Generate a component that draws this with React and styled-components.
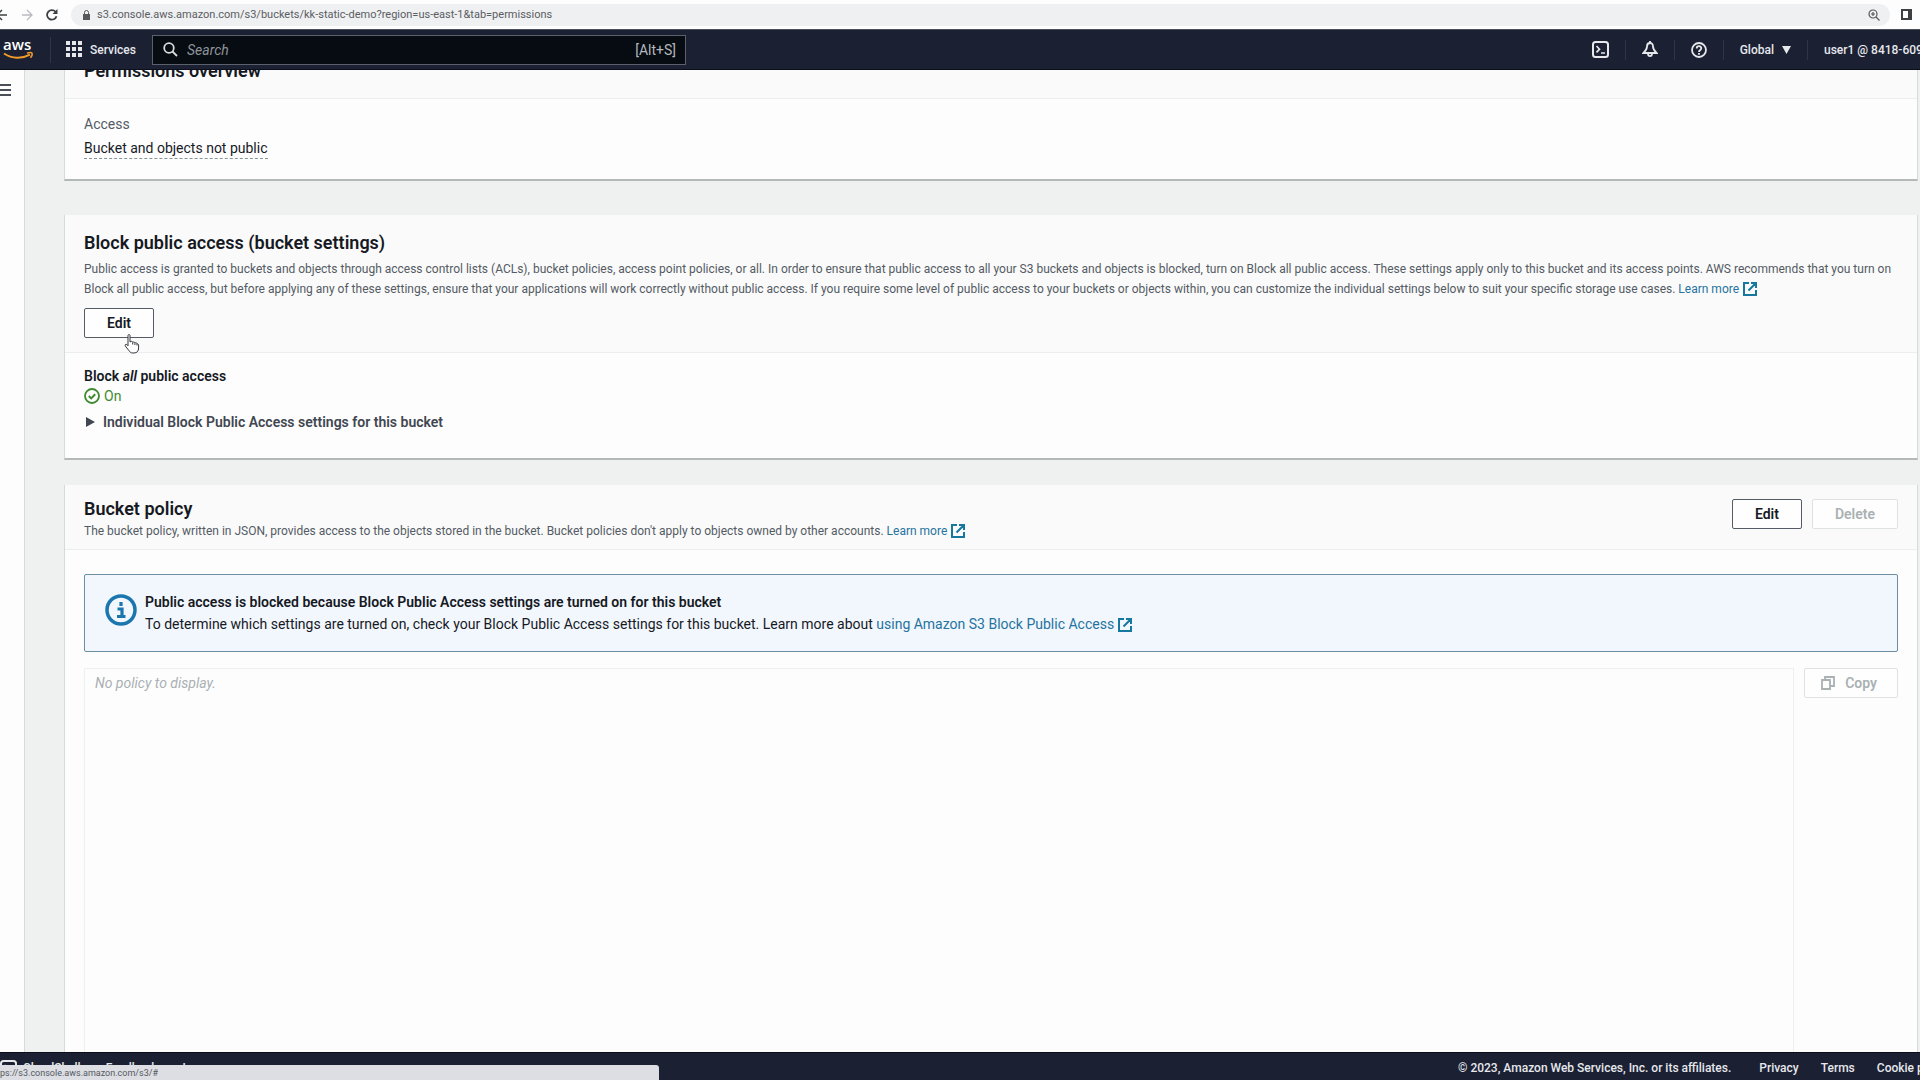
import React from "react";
import styled, { createGlobalStyle } from "styled-components";

const GlobalStyle = createGlobalStyle`
    * {
        box-sizing: border-box;
    }
    body {
        margin: 0;
        overflow: hidden;
        font-family: Roboto, "Noto Sans", sans-serif;
        font-size: 14px;
        line-height: 20px;
        color: #16191f;
    }
    h2, h3, p {
        margin: 0;
    }
    svg {
        display: block;
        flex: none;
    }
    button {
        font-family: inherit;
    }
`;

const Page = styled.div`
    display: flex;
    flex-direction: column;
    height: 100vh;
    overflow: hidden;
    background-color: #eff0f0;
`;

/* browser bar */
const BrowserBar = styled.div`
    display: flex;
    align-items: center;
    flex: none;
    height: 29px;
    padding-right: 8px;
    background-color: #fdfdfd;
`;

const BrowserButton = styled.button`
    display: flex;
    padding: 0;
    border: 0;
    background: none;
    color: ${(props) => (props.$dim ? "#b9bbbe" : "#3c4043")};
    margin-right: ${(props) => props.$gap || 0}px;
`;

const AddressPill = styled.div`
    display: flex;
    align-items: center;
    flex: 1;
    gap: 7px;
    height: 22px;
    padding: 0 10px 0 12px;
    margin-right: 11px;
    border-radius: 11px;
    background-color: #eff0f2;
    color: #55585c;
`;

const AddressInput = styled.input`
    flex: 1;
    min-width: 0;
    padding: 0;
    border: 0;
    outline: 0;
    background: none;
    font-family: inherit;
    font-size: 11px;
    color: #5a5d62;
`;

/* console header */
const TopNav = styled.header`
    display: flex;
    align-items: center;
    flex: none;
    height: 41px;
    background-color: #1b2033;
    border-top: 1px solid #4a4f5c;
    border-bottom: 1px solid #0b0f1c;
    color: #e6e8ec;
    overflow: hidden;
`;

const LogoLink = styled.a`
    display: flex;
    width: 50px;
    padding-left: 3px;
`;

const ServicesButton = styled.button`
    display: flex;
    align-items: center;
    gap: 7px;
    width: 102px;
    height: 26px;
    padding: 0 0 0 15px;
    border: 0;
    border-left: 1px solid #2f3546;
    background: none;
    color: #e6e8ec;
    font-size: 12px;
    font-weight: 500;
`;

const SearchBox = styled.label`
    display: flex;
    align-items: center;
    gap: 9px;
    width: 534px;
    height: 30px;
    padding: 0 9px 0 10px;
    border: 1px solid #5b606c;
    background-color: #070b12;
    color: #b4b8bd;
    font-size: 14px;
`;

const SearchInput = styled.input`
    flex: 1;
    min-width: 0;
    padding: 0;
    border: 0;
    outline: 0;
    background: none;
    font-family: inherit;
    font-size: 14px;
    color: #d5dbdb;

    &::placeholder {
        color: #8f949a;
        font-style: italic;
        opacity: 1;
    }
`;

const NavTools = styled.div`
    display: flex;
    align-items: center;
    margin-left: auto;
`;

const NavButton = styled.button`
    display: flex;
    align-items: center;
    gap: 8px;
    height: 20px;
    padding: 0 16px;
    border: 0;
    border-left: 1px solid ${(props) => (props.$first ? "transparent" : "#2f3546")};
    background: none;
    color: #e6e8ec;
    font-size: 12px;
    font-weight: 500;
    white-space: nowrap;
`;

const UserButton = styled(NavButton)`
    width: 113px;
    padding-right: 0;
    overflow: hidden;
`;

/* body */
const Body = styled.div`
    display: flex;
    flex: 1;
    min-height: 0;
    overflow: hidden;
`;

const SideRail = styled.aside`
    flex: none;
    width: 25px;
    padding-top: 13px;
    background-color: #fdfdfe;
    border-right: 1px solid #d8dada;
`;

const RailButton = styled.button`
    display: block;
    padding: 0;
    border: 0;
    background: none;
    color: #4a4f57;
`;

const Content = styled.main`
    display: flex;
    flex-direction: column;
    flex: 1;
    gap: 25px;
    min-width: 0;
    padding: 0 2px 0 39px;
    margin-top: -14px;
`;

const Panel = styled.section`
    flex: ${(props) => (props.$grow ? "1 0 auto" : "none")};
    display: flex;
    flex-direction: column;
    border-left: 1px solid #d5dbdb;
    border-right: 1px solid #d5dbdb;
    border-bottom: 2px solid #b4b8b9;
    margin-bottom: ${(props) => props.$after || 0}px;
    background-color: #fdfdfe;
`;

const PanelHeader = styled.div`
    display: flex;
    justify-content: space-between;
    align-items: flex-start;
    padding: ${(props) => props.$top || 14}px 19px ${(props) => props.$bottom || 15}px;
    border-bottom: 1px solid #eceeee;
    background-color: #fafafa;
`;

const PanelTitle = styled.h2`
    font-size: 18px;
    line-height: 24px;
    font-weight: 600;
`;

const Description = styled.p`
    margin-top: ${(props) => props.$gap || 0}px;
    font-size: 12px;
    color: #545b64;
`;

const PanelBody = styled.div`
    display: flex;
    flex-direction: column;
    align-items: flex-start;
    padding: ${(props) => props.$top}px 19px ${(props) => props.$bottom || 0}px;
    flex: 1;
`;

const Muted = styled.span`
    margin-bottom: 2px;
    line-height: 24px;
    color: #545b64;
`;

const DottedText = styled.span`
    line-height: 20px;
    border-bottom: 1px dashed #879596;
`;

const Link = styled.a`
    color: #2573a0;
    text-decoration: none;

    svg {
        display: inline-block;
        vertical-align: -3px;
        margin-left: 4px;
    }
`;

const Button = styled.button`
    display: inline-flex;
    align-items: center;
    justify-content: center;
    gap: 10px;
    height: 30px;
    padding: ${(props) => (props.$icon ? "0 20px 0 16px" : "0 22px")};
    border: 1px solid #545b64;
    border-radius: 2px;
    background-color: #fefefe;
    font-size: 14px;
    font-weight: 600;
    color: #16191f;

    &:disabled {
        border-color: #dfe2e2;
        color: #aab1b3;
    }
`;

const ButtonGroup = styled.div`
    display: flex;
    gap: 10px;
    padding-top: 2px;
`;

const EditAnchor = styled.div`
    position: relative;
    display: flex;
    width: fit-content;
    margin-top: 9px;
`;

/* pointer resting on the edit button */
const Cursor = styled.svg`
    position: absolute;
    left: 40px;
    top: 26px;
`;

const Label = styled.h3`
    font-size: 14px;
    line-height: 20px;
    font-weight: 600;
`;

const Status = styled.div`
    display: flex;
    align-items: center;
    gap: 4px;
    color: #3d8b2f;
`;

const Expander = styled.button`
    display: flex;
    align-items: center;
    gap: 8px;
    margin-top: 6px;
    padding: 0 0 0 2px;
    border: 0;
    background: none;
    font-size: 14px;
    line-height: 20px;
    font-weight: 600;
    color: #414750;
`;

const Alert = styled.div`
    display: flex;
    align-items: flex-start;
    align-self: stretch;
    gap: 8px;
    padding: 16px 20px;
    border: 1px solid #6c8ea3;
    border-radius: 2px;
    background-color: #f2f7fd;
    line-height: 22px;

    > svg {
        margin-top: 3px;
    }
    h3 {
        line-height: 22px;
    }
`;

const PolicyRow = styled.div`
    display: flex;
    align-items: flex-start;
    align-self: stretch;
    flex: 1;
    gap: 10px;
    margin-top: 16px;
`;

const PolicyText = styled.textarea`
    flex: 1;
    align-self: stretch;
    min-height: 500px;
    padding: 4px 10px;
    border: 1px solid #eff1f1;
    outline: 0;
    resize: none;
    background-color: #fdfdfe;
    font-family: inherit;
    font-size: 14px;
    line-height: 20px;

    &::placeholder {
        color: #aab0b2;
        font-style: italic;
        opacity: 1;
    }
`;

/* footer */
const Footer = styled.footer`
    position: relative;
    display: flex;
    align-items: flex-start;
    flex: none;
    height: 28px;
    padding-top: 5px;
    background-color: #1b2033;
    border-top: 1px solid #0b0f1c;
    overflow: hidden;
    font-size: 12px;
    font-weight: 500;
    white-space: nowrap;
`;

const FooterLinks = styled.nav`
    display: flex;
    gap: ${(props) => (props.$right ? 22 : 25)}px;
    margin-left: ${(props) => (props.$right ? "auto" : "0")};
    width: ${(props) => (props.$right ? "462px" : "auto")};
    color: #e6e8ec;

    a {
        display: flex;
        align-items: center;
        gap: 6px;
        color: inherit;
        text-decoration: none;
    }
`;

const Copyright = styled.span`
    margin-right: 6px;
`;

const StatusBubble = styled.div`
    position: absolute;
    left: 0;
    bottom: 0;
    width: 659px;
    height: 15px;
    border-top-right-radius: 3px;
    background-color: #dcdee3;
    color: #55585f;
    font-size: 9px;
    line-height: 17px;
    font-weight: 400;
`;

const ExternalIcon = () => (
    <svg width="14" height="14" viewBox="0 0 14 14" fill="none" stroke="#16789f" strokeWidth="2">
        <path d="M6 1H1v12h12V8M8 1h5v5M13 1L5.500 8.500" />
    </svg>
);

const ShellIcon = () => (
    <svg width="17" height="17" viewBox="0 0 17 17" fill="none" stroke="currentColor" strokeWidth="2">
        <rect x="1" y="1" width="15" height="15" rx="2.500" />
        <path d="M4.500 5l3 3.200-3 3.200M9 12h4" strokeWidth="1.700" />
    </svg>
);

const LearnMore = ({ children }) => (
    <Link href="#">
        {children}
        <ExternalIcon />
    </Link>
);

const Browser = () => (
    <BrowserBar>
        <BrowserButton aria-label="Back" $gap={14}>
            <svg width="8" height="12" viewBox="0 0 8 12" fill="none" stroke="currentColor" strokeWidth="1.500">
                <path d="M7 6H-2M2 1L-3 6l5 5" />
            </svg>
        </BrowserButton>
        <BrowserButton aria-label="Forward" $dim $gap={13}>
            <svg width="11" height="12" viewBox="0 0 11 12" fill="none" stroke="currentColor" strokeWidth="1.300">
                <path d="M0 6h10M5 1l5 5-5 5" />
            </svg>
        </BrowserButton>
        <BrowserButton aria-label="Reload" $gap={13}>
            <svg width="12" height="12" viewBox="0 0 12 12" fill="none" stroke="currentColor" strokeWidth="1.800">
                <path d="M10.500 7.200A4.800 4.800 0 1 1 9.600 2.800" />
                <path d="M11.500 0v5h-5z" fill="currentColor" stroke="none" />
            </svg>
        </BrowserButton>
        <AddressPill>
            <svg width="7" height="10" viewBox="0 0 7 10" fill="currentColor">
                <path d="M0 4h7v6H0z" />
                <path d="M1.500 4V2.500a2 2 0 0 1 4 0V4" fill="none" stroke="currentColor" />
            </svg>
            <AddressInput
                aria-label="Address"
                defaultValue="s3.console.aws.amazon.com/s3/buckets/kk-static-demo?region=us-east-1&tab=permissions"
            />
            <svg width="12" height="12" viewBox="0 0 12 12" fill="none" stroke="currentColor" strokeWidth="1.200">
                <circle cx="5" cy="5" r="4" />
                <path d="M8 8l3.500 3.500M3 5h4M5 3v4" />
            </svg>
        </AddressPill>
        <BrowserButton aria-label="Side panel">
            <svg width="11" height="11" viewBox="0 0 11 11">
                <rect x="1" y="1" width="9" height="9" fill="#fff" stroke="#3c4043" strokeWidth="2" />
                <path d="M7 1h3v9H7z" fill="#3c4043" />
            </svg>
        </BrowserButton>
    </BrowserBar>
);

const Header = () => (
    <TopNav>
        <LogoLink href="#" aria-label="AWS">
            <svg width="31" height="22" viewBox="0 0 31 22">
                <text x="0" y="11" fontFamily="Open Sans, sans-serif" fontSize="15" fontWeight="600" fill="#fff">
                    aws
                </text>
                <path d="M1 14.500c8 5.500 18 5.500 26 1.200" fill="none" stroke="#f19b2c" strokeWidth="2" />
                <path d="M24 14.200c2-.8 4.500-.8 5 0 .4 1-.3 3.200-1.600 4.600" fill="none" stroke="#f19b2c" strokeWidth="1.500" />
            </svg>
        </LogoLink>
        <ServicesButton>
            <svg width="17" height="17" viewBox="0 0 17 17" fill="currentColor">
                {[0, 6, 12].map((y) => [0, 6, 12].map((x) => <rect key={x + "-" + y} x={x} y={y} width="4" height="4" />))}
            </svg>
            Services
        </ServicesButton>
        <SearchBox>
            <svg width="15" height="15" viewBox="0 0 15 15" fill="none" stroke="#d5dbdb" strokeWidth="1.800">
                <circle cx="6" cy="6" r="4.800" />
                <path d="M9.500 9.500L14 14" />
            </svg>
            <SearchInput aria-label="Search" placeholder="Search" />
            [Alt+S]
        </SearchBox>
        <NavTools>
            <NavButton $first aria-label="CloudShell">
                <ShellIcon />
            </NavButton>
            <NavButton aria-label="Notifications">
                <svg width="16" height="17" viewBox="0 0 16 17" fill="none" stroke="currentColor" strokeWidth="1.800">
                    <path d="M8 2c-2 0-3 1.500-3 3.500C5 8.500 3.500 10 1.500 12h13c-2-2-3.500-3.500-3.500-6.500C11 3.500 10 2 8 2zM8 0v2M6 12.500c0 3.600 4 3.600 4 0" />
                </svg>
            </NavButton>
            <NavButton aria-label="Help">
                <svg width="16" height="16" viewBox="0 0 16 16" fill="none" stroke="currentColor" strokeWidth="1.800">
                    <circle cx="8" cy="8" r="7" />
                    <path d="M5.700 6.500c0-3 4.600-3 4.600-.2 0 1.700-2.300 1.600-2.300 3.700M8 11v1.700" />
                </svg>
            </NavButton>
            <NavButton>
                Global
                <svg width="9" height="8" viewBox="0 0 9 8" fill="currentColor">
                    <path d="M0 0h9L4.500 8z" />
                </svg>
            </NavButton>
            <UserButton>user1 @ 8418-609</UserButton>
        </NavTools>
    </TopNav>
);

const App = () => {
    return (
        <Page>
            <GlobalStyle />
            <Browser />
            <Header />
            <Body>
                <SideRail>
                    <RailButton aria-label="Open navigation">
                        <svg width="11" height="14" viewBox="0 0 11 14" stroke="currentColor" strokeWidth="2">
                            <path d="M0 2h11M0 7h11M0 12h11" />
                        </svg>
                    </RailButton>
                </SideRail>
                <Content>
                    <Panel $after={9}>
                        <PanelHeader $top={3} $bottom={15}>
                            <PanelTitle>Permissions overview</PanelTitle>
                        </PanelHeader>
                        <PanelBody $top={13} $bottom={20}>
                            <Muted>Access</Muted>
                            <DottedText>Bucket and objects not public</DottedText>
                        </PanelBody>
                    </Panel>

                    <Panel>
                        <PanelHeader $top={16} $bottom={14}>
                            <div>
                                <PanelTitle>Block public access (bucket settings)</PanelTitle>
                                <Description $gap={4}>
                                    Public access is granted to buckets and objects through access control lists (ACLs), bucket
                                    policies, access point policies, or all. In order to ensure that public access to all your S3
                                    buckets and objects is blocked, turn on Block all public access. These settings apply only to
                                    this bucket and its access points. AWS recommends that you turn on Block all public access,
                                    but before applying any of these settings, ensure that your applications will work correctly
                                    without public access. If you require some level of public access to your buckets or objects
                                    within, you can customize the individual settings below to suit your specific storage use
                                    cases. <LearnMore>Learn more</LearnMore>
                                </Description>
                                <EditAnchor>
                                    <Button>Edit</Button>
                                    <Cursor width="17" height="20" viewBox="0 0 17 20" fill="#fff" stroke="#33373d" strokeLinejoin="round">
                                        <path d="M4 1.500c0-1.300 2-1.300 2 0V8l1-.5c1-.4 1.700.1 1.700.8 1-.6 2-.2 2.200.6 1-.5 2.100 0 2.100 1 .9-.3 1.600.3 1.600 1.200V14c0 3-1.600 5-4.600 5H9c-2 0-3-.8-4-2.300L1.300 12c-.8-1.200.7-2.300 1.700-1.300l1 1.100z" />
                                        <path d="M8.700 8.500v2M10.900 9.200v1.800M13 10v1.500" fill="none" />
                                    </Cursor>
                                </EditAnchor>
                            </div>
                        </PanelHeader>
                        <PanelBody $top={13} $bottom={26}>
                            <Label>
                                Block <em>all</em> public access
                            </Label>
                            <Status>
                                <svg width="16" height="16" viewBox="0 0 16 16" fill="none" stroke="currentColor" strokeWidth="1.800">
                                    <circle cx="8" cy="8" r="7" />
                                    <path d="M4.800 8l2.400 2.400 4-4.200" strokeWidth="2" />
                                </svg>
                                On
                            </Status>
                            <Expander>
                                <svg width="9" height="10" viewBox="0 0 9 10" fill="currentColor">
                                    <path d="M0 0l9 5-9 5z" />
                                </svg>
                                Individual Block Public Access settings for this bucket
                            </Expander>
                        </PanelBody>
                    </Panel>

                    <Panel $grow>
                        <PanelHeader $top={12} $bottom={8}>
                            <div>
                                <PanelTitle>Bucket policy</PanelTitle>
                                <Description>
                                    The bucket policy, written in JSON, provides access to the objects stored in the bucket.
                                    Bucket policies don't apply to objects owned by other accounts. <LearnMore>Learn more</LearnMore>
                                </Description>
                            </div>
                            <ButtonGroup>
                                <Button>Edit</Button>
                                <Button disabled>Delete</Button>
                            </ButtonGroup>
                        </PanelHeader>
                        <PanelBody $top={24}>
                            <Alert>
                                <svg width="32" height="32" viewBox="0 0 32 32" fill="none" stroke="#1b76ad">
                                    <circle cx="16" cy="16" r="14" strokeWidth="3.500" />
                                    <path d="M16 8v4M12.500 15H17v8M12 22.500h8.500" strokeWidth="3.200" />
                                </svg>
                                <div>
                                    <Label>Public access is blocked because Block Public Access settings are turned on for this bucket</Label>
                                    <p>
                                        To determine which settings are turned on, check your Block Public Access settings for this
                                        bucket. Learn more about <LearnMore>using Amazon S3 Block Public Access</LearnMore>
                                    </p>
                                </div>
                            </Alert>
                            <PolicyRow>
                                <PolicyText aria-label="Bucket policy" placeholder="No policy to display." readOnly />
                                <Button $icon disabled>
                                    <svg width="14" height="14" viewBox="0 0 14 14" fill="none" stroke="currentColor" strokeWidth="1.800">
                                        <path d="M1 4h8v9H1zM4 4V1h9v9H9" />
                                    </svg>
                                    Copy
                                </Button>
                            </PolicyRow>
                        </PanelBody>
                    </Panel>
                </Content>
            </Body>
            <Footer>
                <FooterLinks>
                    <a href="#">
                        <ShellIcon />
                        CloudShell
                    </a>
                    <a href="#">Feedback</a>
                    <a href="#">Language</a>
                </FooterLinks>
                <FooterLinks $right>
                    <Copyright>© 2023, Amazon Web Services, Inc. or its affiliates.</Copyright>
                    <a href="#">Privacy</a>
                    <a href="#">Terms</a>
                    <a href="#">Cookie preferences</a>
                </FooterLinks>
                <StatusBubble>ps://s3.console.aws.amazon.com/s3/#</StatusBubble>
            </Footer>
        </Page>
    );
};

export default App;
